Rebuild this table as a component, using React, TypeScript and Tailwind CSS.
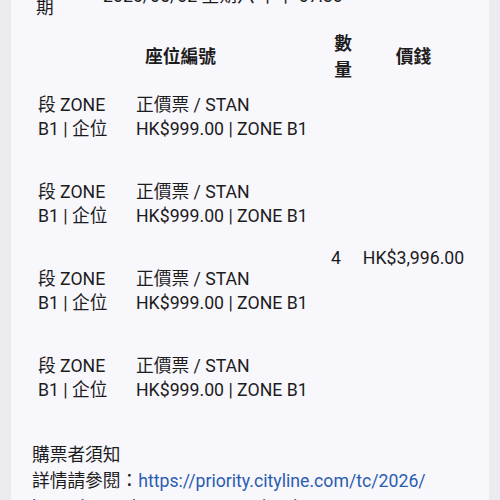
import React from "react";

export default function App() {
  const font = { fontFamily: 'Roboto, "Noto Sans CJK TC", "Noto Sans", sans-serif' };
  const rows = [0, 1, 2, 3];
  return (
    <div className="w-[500px] h-[500px] overflow-hidden bg-[#ececf0]" style={font}>
      <div className="mx-[11px] h-[560px] bg-[#f8f7fc] pl-[21px] pr-[10px] text-[17.7px] text-[#1c1c1c] leading-[24px]">
        {/* date row */}
        <div className="-mt-[28px] flex items-center">
          <div className="ml-[4px] w-[18px]">
            <span className="block">日</span>
            <span className="block">期</span>
          </div>
          <div className="ml-[49px] whitespace-nowrap">2026/05/02 星期六 下午 07:30</div>
        </div>

        {/* table */}
        <div className="mt-[10px] grid grid-cols-[98px_195px_32px_113px]">
          <div className="col-span-2 h-[54px] flex items-center justify-center pl-[10px] pr-[6px] font-bold">
            座位編號
          </div>
          <div className="col-start-3 h-[54px] flex items-center justify-center pl-[6px] pr-[2px] font-bold leading-[26px] text-center">
            <span className="w-[18px] block">數量</span>
          </div>
          <div className="col-start-4 h-[54px] flex items-center justify-center px-[6px] font-bold">
            價錢
          </div>

          {rows.map((i) => (
            <React.Fragment key={i}>
              <div className="col-start-1 pl-[6px] pt-[9px] pb-[30px] whitespace-nowrap">
                <span className="block">段 ZONE</span>
                <span className="block">B1 | 企位</span>
              </div>
              <div className="col-start-2 pl-[6px] pt-[9px] pb-[30px] whitespace-nowrap">
                <span className="block">正價票 / STAN</span>
                <span className="block">HK$999.00 | ZONE B1</span>
              </div>
              {i === 0 && (
                <>
                  <div className="col-start-3 row-start-2 row-span-4 flex items-center pl-[6px]">4</div>
                  <div className="col-start-4 row-start-2 row-span-4 flex items-center justify-center px-[6px] whitespace-nowrap">
                    HK$3,996.00
                  </div>
                </>
              )}
            </React.Fragment>
          ))}
        </div>

        {/* notes */}
        <div className="mt-[10px] leading-[26px]">
          <div>購票者須知</div>
          <div>
            詳情請參閱：
            <a className="text-[#2a5db0]" href="#">
              https://priority.cityline.com/tc/2026/
              <br />
              kpopclassicdaytourasia2026.html
            </a>
          </div>
        </div>
      </div>
    </div>
  );
}
